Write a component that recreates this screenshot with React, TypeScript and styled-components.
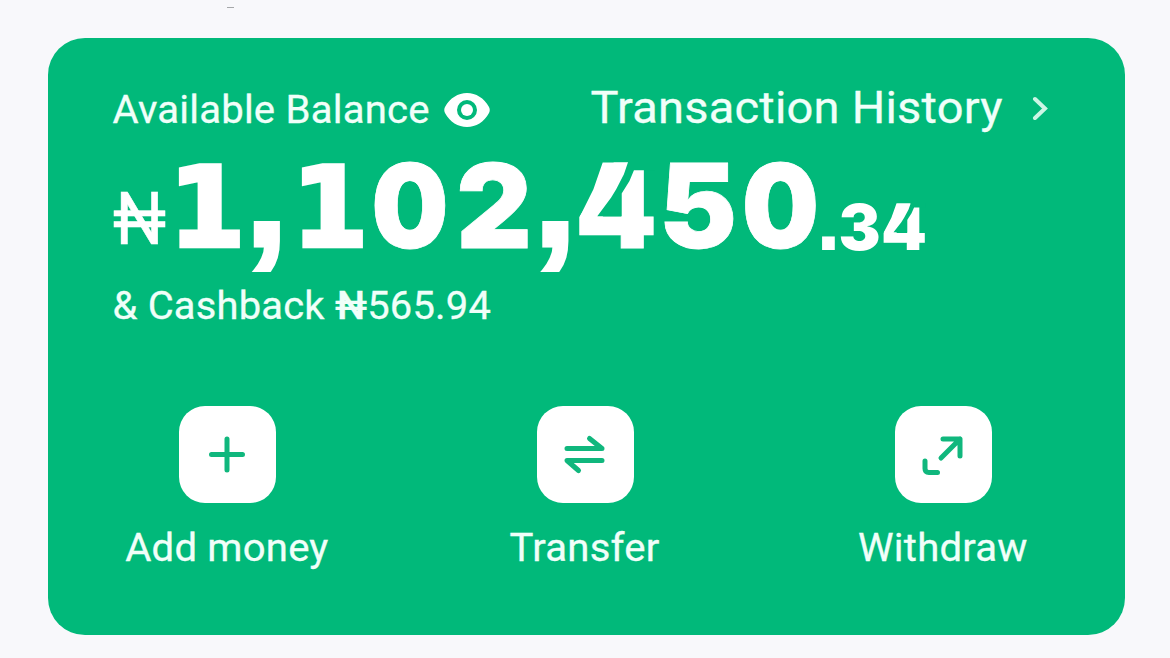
import React from "react";
import styled, { createGlobalStyle } from "styled-components";

const GREEN = "#01b97a";

const GlobalStyle = createGlobalStyle`
  *, *::before, *::after { box-sizing: border-box; }
  body {
    margin: 0;
    background: #f8f8fb;
    font-family: Roboto, "Noto Sans", sans-serif;
    color: #fff;
    overflow: hidden;
  }
`;

const Page = styled.main`
  height: 658px;
  padding: 7px 45px 23px 48px;
  display: flex;
  flex-direction: column;
`;

const Handle = styled.div`
  width: 7px;
  height: 1px;
  margin: 0 0 30px 179px;
  background: #a5a7a9;
`;

const Card = styled.section`
  flex: 1;
  border-radius: 37px;
  background: ${GREEN};
  padding: 44px 77px 0 65px;
`;

const Header = styled.header`
  display: flex;
  justify-content: space-between;
  align-items: center;
  height: 52px;
`;

const Row = styled.div<{ $top?: number }>`
  display: flex;
  align-items: center;
  padding-top: ${(p) => p.$top ?? 0}px;
`;

const Text = styled.span<{ $size?: number; $stretch?: number; $width?: number; $centered?: boolean }>`
  display: block;
  width: ${(p) => (p.$width ? `${p.$width}px` : "auto")};
  font-size: ${(p) => p.$size ?? 38}px;
  letter-spacing: 0.2px;
  line-height: 52px;
  white-space: pre;
  color: #f0fff9;
  -webkit-text-stroke: 0.3px #f0fff9;
  transform: translateX(-0.5px) scaleX(${(p) => p.$stretch ?? 1.055});
  transform-origin: ${(p) => (p.$centered ? "center" : "left")};
`;

const EyeIcon = styled.svg`
  width: 46px;
  height: 36px;
`;

const Chevron = styled.svg`
  width: 16px;
  height: 24px;
`;

const Amount = styled.div`
  display: flex;
  align-items: baseline;
  height: 142px;
  padding-top: 28.5px;
  line-height: 60px;
  font-family: Inter, sans-serif;
  font-weight: 900;
`;

const Currency = styled.span`
  width: 60px;
  font-family: Roboto, sans-serif;
  font-size: 72px;
  font-weight: 400;
  -webkit-text-stroke: 0.5px #fff;
  transform: translateY(-4px) scaleX(0.93);
  transform-origin: left;
`;

const Glyph = styled.span<{ $width: number; $size: number; $stretch?: number; $family?: string; $stroke?: number; $drop?: number }>`
  position: relative;
  display: flex;
  justify-content: center;
  flex: none;
  width: ${(p) => p.$width}px;
  font-size: ${(p) => p.$size}px;
  font-family: ${(p) => p.$family ?? "Inter"}, sans-serif;
  -webkit-text-stroke: ${(p) => p.$stroke ?? 0}px #fff;
  transform: translateY(${(p) => p.$drop ?? 0}px) scaleX(${(p) => p.$stretch ?? 1});
`;

/* A numeral four with an open top: a wide diagonal and the gap beside it, sized in em of the numeral. */
const OpenFour = styled(Glyph)`
  &::before,
  &::after {
    content: "";
    position: absolute;
    left: calc(50% - 0.325em);
    top: calc(50% - 0.375em);
    width: 0.66em;
    height: 0.4712em;
  }
  &::before {
    background: #fff;
    clip-path: polygon(32% 1.5%, 65% 1.5%, 59.5% 23%, 49.5% 50%, 43% 65%, 25% 100%, 2.3% 100%, 20% 50%);
  }
  &::after {
    background: ${GREEN};
    clip-path: polygon(65% 0, 100% 0, 100% 15.6%, 72.5% 15.6%, 66.7% 35%, 56.6% 58%, 56.6% 99%, 25% 99%, 43% 65%, 49.5% 50%, 59.5% 23%);
  }
`;

const Cashback = styled.div`
  height: 52px;
  margin-top: 4px;
`;

const Naira = styled.b`
  font-weight: 500;
`;

const Actions = styled.nav`
  display: grid;
  grid-template-columns: repeat(3, 358px);
  margin: 74px 0 0 -65px;
`;

const Action = styled.div`
  display: flex;
  flex-direction: column;
  align-items: center;
`;

const Tile = styled.div`
  width: 97px;
  height: 97px;
  border-radius: 26px;
  background: #fff;
  display: grid;
  place-items: center;
  margin-bottom: 19px;
`;

const TileIcon = styled.svg`
  width: 48px;
  height: 48px;
  fill: none;
  stroke: #10b77d;
  stroke-width: 5;
  stroke-linecap: round;
  stroke-linejoin: round;
`;

type Numeral = { c: string; w: number; size: number; stretch?: number; family?: string; stroke?: number; drop?: number };

const ONE = { c: "1", size: 111, family: '"DejaVu Sans"', stroke: 4.5, drop: -2, stretch: 0.99 };
const COMMA = { c: ",", size: 158, family: '"Liberation Sans"', stroke: 3, drop: -2.5, stretch: 1.03 };

const AMOUNT: Numeral[] = [
  { ...ONE, w: 68 },
  { ...COMMA, w: 51 },
  { ...ONE, w: 76 },
  { c: "0", w: 84, size: 117, stretch: 0.93, stroke: 0.8 },
  { c: "2", w: 84, size: 117, stroke: 0.8 },
  { ...COMMA, w: 38 },
  { c: "4", w: 84, size: 117, stroke: 0.8 },
  { c: "5", w: 80, size: 117, stroke: 0.8 },
  { c: "0", w: 85, size: 117, stretch: 0.93, stroke: 0.8 },
  { c: ".", w: 11, size: 72, family: '"DejaVu Sans"', drop: 2 },
  { c: "3", w: 51, size: 63, drop: 2 },
  { c: "4", w: 38, size: 63, drop: 2, stretch: 1.04 },
];

const ACTIONS = [
  { label: "Add money", path: "M24 8V39M8.5 23.5H39.5" },
  { label: "Transfer", path: "M6 17.500H41L28.5 7.500M41 29.500H6L17.5 39.500" },
  { label: "Withdraw", path: "M22 27L41 8M24 8H41V25M6 30V37.500Q6 41.500 10 41.500H18.500" },
];

export default function App() {
  return (
    <Page>
      <GlobalStyle />
      <Handle />
      <Card>
        <Header>
          <Row $top={3}>
            <Text $width={331}>Available Balance</Text>
            <EyeIcon viewBox="0 0 46 36">
              <path fill="#fff" fillRule="evenodd" d="M1 15C6 6 14 1 23 1S40 6 45 15Q46.500 18 45 21C40 30 32 35 23 35S6 30 1 21Q-.5 18 1 15ZM23 8a10 10 0 1 0 0 20a10 10 0 1 0 0-20Z" />
              <circle cx="23" cy="18" r="6" fill="#fff" />
            </EyeIcon>
          </Row>
          <Row>
            <Text $size={45} $stretch={1.045} $width={441}>Transaction History</Text>
            <Chevron viewBox="0 0 16 24" fill="none" stroke="#ccf5e5" strokeWidth="4" strokeLinecap="round">
              <path d="M3 3L13 12.500L3 22" />
            </Chevron>
          </Row>
        </Header>
        <Amount>
          <Currency>₦</Currency>
          {AMOUNT.map((n, i) => {
            const Part = n.c === "4" ? OpenFour : Glyph;
            return (
              <Part key={i} $width={n.w} $size={n.size} $stretch={n.stretch} $family={n.family} $stroke={n.stroke} $drop={n.drop}>
                {n.c}
              </Part>
            );
          })}
        </Amount>
        <Cashback>
          <Text $stretch={1.05}>& Cashback <Naira>₦</Naira>565.94</Text>
        </Cashback>
        <Actions>
          {ACTIONS.map((a) => (
            <Action key={a.label}>
              <Tile>
                <TileIcon viewBox="0 0 48 48"><path d={a.path} /></TileIcon>
              </Tile>
              <Text $centered>{a.label}</Text>
            </Action>
          ))}
        </Actions>
      </Card>
    </Page>
  );
}
